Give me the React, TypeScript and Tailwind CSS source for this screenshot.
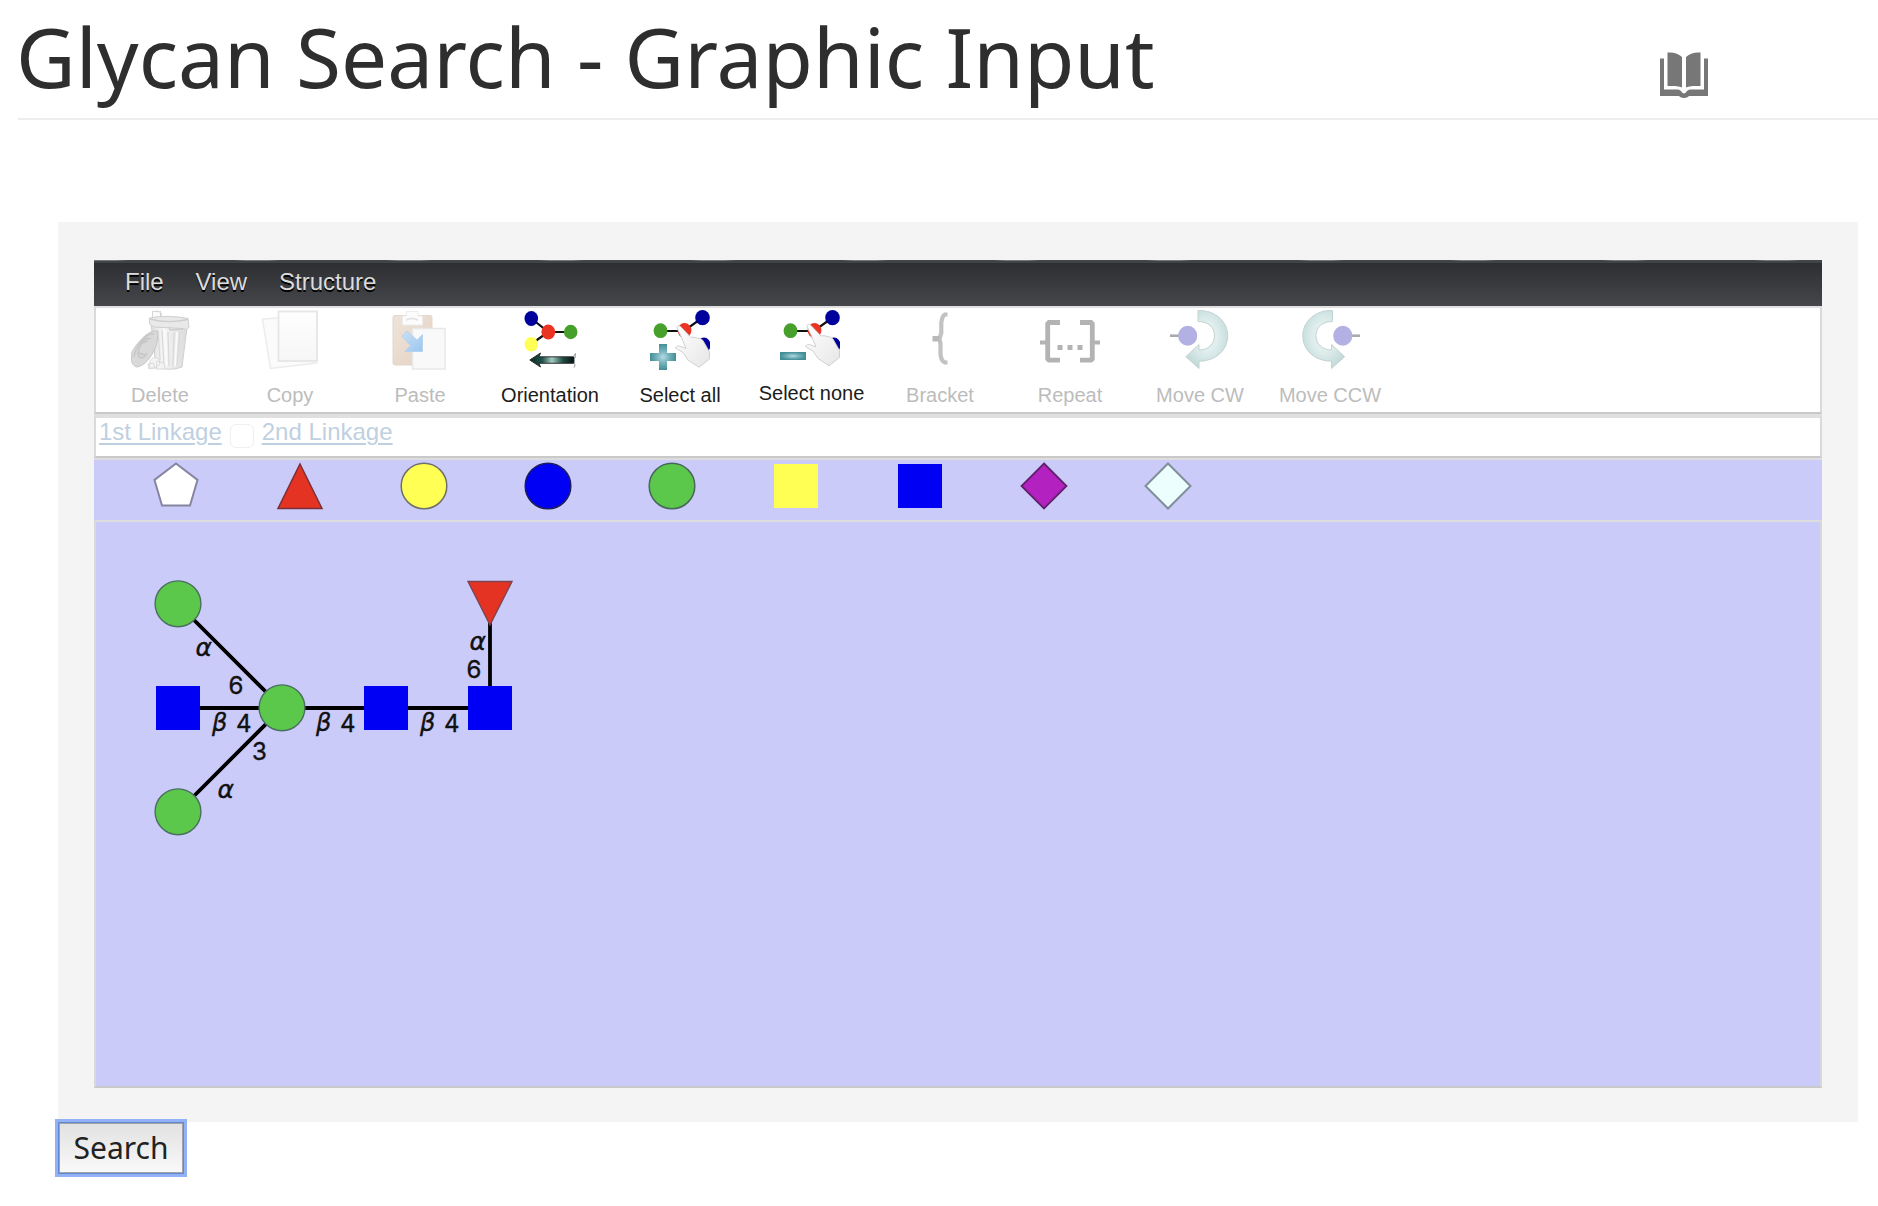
import React from "react";

type IconProps = { children: React.ReactNode };

function Icon({ children }: IconProps) {
  return (
    <svg width="60" height="60" viewBox="0 0 60 60" className="block">
      {children}
    </svg>
  );
}

function TrashIcon() {
  return (
    <Icon>
      <defs>
        <linearGradient id="can" x1="0" x2="1">
          <stop offset="0" stopColor="#dedede" />
          <stop offset="0.35" stopColor="#f6f6f6" />
          <stop offset="0.7" stopColor="#e6e6e6" />
          <stop offset="1" stopColor="#dcdcdc" />
        </linearGradient>
      </defs>
      <rect x="22.5" y="1.5" width="8" height="7" fill="#fafafa" stroke="#d6d6d6" />
      <path d="M26 0.5L31.5 3V8" fill="none" stroke="#dcdcdc" />
      <path d="M21 13L26 57Q40 61.5 52 57L57 17Z" fill="url(#can)" stroke="#d0d0d0" />
      <path d="M19.5 8Q38 4.500 58 8.500L59 17Q57 21 53 18.500L24 17L19.500 14Z" fill="#e9e9e9" stroke="#cfcfcf" />
      <path d="M20 9Q38 14 58 9.500M39 17L40 20L53 19" fill="none" stroke="#cecece" strokeWidth="1.300" />
      <path d="M32 20L34 54M38 22L39 56M44 23L43 56M50 22L47 56M28 20L30 50" fill="none" stroke="#d9d9d9" strokeWidth="1.200" />
      <path d="M35 20L36.500 55M47 22L45 56" fill="none" stroke="#fafafa" strokeWidth="2" />
      <path d="M27 21C20 19 8 31 2 42C1 50 1 54 6 57C14 57 22 47 26 36C28 29 28 24 27 21Z" fill="#d9d9d9" stroke="#c8c8c8" />
      <path d="M24 24C16 22 5 38 4 47M21 29C15 26 9 35 8 44C9 49 14 49 17 43M18 31L12 33M9 43L15 45" fill="none" stroke="#c6c6c6" strokeWidth="1.500" />
      <path d="M20 51L24 47L29 49L30 54L26 58H19ZM27 51L34 53L35 59H26ZM18 54L23 53L25 58L19 59Z" fill="#f3f3f3" stroke="#d8d8d8" strokeWidth="0.900" />
    </Icon>
  );
}

function CopyIcon() {
  return (
    <Icon>
      <defs>
        <linearGradient id="sheet" x1="0" x2="0" y1="0" y2="1">
          <stop offset="0" stopColor="#fefefe" />
          <stop offset="1" stopColor="#f6f6f6" />
        </linearGradient>
      </defs>
      <path d="M2.500 9L18 8L49 50L56 53L10.500 58.500Z" fill="#fbfbfb" stroke="#ececec" strokeWidth="1.500" />
      <rect x="18.500" y="1.500" width="38.500" height="49.500" fill="url(#sheet)" stroke="#e6e6e6" strokeWidth="1.800" />
    </Icon>
  );
}

function PasteIcon() {
  return (
    <Icon>
      <defs>
        <linearGradient id="board" x1="0" x2="1" y1="0" y2="1">
          <stop offset="0" stopColor="#efe3d9" />
          <stop offset="1" stopColor="#e3d2c3" />
        </linearGradient>
        <linearGradient id="down" x1="0" x2="1" y1="0" y2="1">
          <stop offset="0" stopColor="#c9e0f6" />
          <stop offset="1" stopColor="#9cc6f0" />
        </linearGradient>
      </defs>
      <rect x="3" y="5.500" width="39" height="49.500" rx="2" fill="url(#board)" stroke="#e3d6cb" />
      <path d="M12.500 6H16.500V1.500H28V6H32.500V15H12.500Z" fill="#fcfcfc" stroke="#ececec" />
      <path d="M16 10Q22 7 28 10" fill="none" stroke="#e5e5e5" strokeWidth="2" />
      <rect x="22.500" y="18.500" width="32.500" height="40.500" fill="#f9f9f9" stroke="#e8e8e8" strokeWidth="1.500" />
      <path d="M12 26L17 21L27 30L32.500 24.500V41.500H15L20.500 35.500Z" fill="url(#down)" stroke="#b0d0ee" strokeWidth="0.800" />
    </Icon>
  );
}

function OrientationIcon() {
  return (
    <Icon>
      <defs>
        <linearGradient id="shaft" x1="0" x2="1">
          <stop offset="0" stopColor="#0d2a27" />
          <stop offset="0.280" stopColor="#1f5148" />
          <stop offset="0.500" stopColor="#a5cbc0" />
          <stop offset="0.750" stopColor="#1f4c44" />
          <stop offset="1" stopColor="#06110f" />
        </linearGradient>
      </defs>
      <path d="M11.300 8.500L28.300 22L11.300 34M28.300 22H50" fill="none" stroke="#111" strokeWidth="2.200" />
      <ellipse cx="11.300" cy="8.500" rx="6.800" ry="7.400" fill="#00009c" />
      <ellipse cx="28.300" cy="22" rx="6.900" ry="7.400" fill="#ea3323" />
      <ellipse cx="50.700" cy="22" rx="6.800" ry="7.200" fill="#48a02c" />
      <ellipse cx="11.300" cy="34.300" rx="6.700" ry="7.200" fill="#ffff54" />
      <path d="M9.800 50L20.500 43L19 46.800H54V53.300H19L20.500 57Z" fill="url(#shaft)" stroke="#222" strokeWidth="0.900" />
      <path d="M53 47L55.500 43.500L55 48M53.500 53Q56 54 54 57.500" fill="none" stroke="#999" strokeWidth="1" />
    </Icon>
  );
}

function SelectIcon({ mode }: { mode: "all" | "none" }) {
  const hand = mode === "all" ? "translate(0 0)" : "translate(0 -1.5)";
  return (
    <Icon>
      <defs>
        <radialGradient id={"teal-" + mode}>
          <stop offset="0" stopColor="#b4dbe4" />
          <stop offset="0.450" stopColor="#79b4bd" />
          <stop offset="1" stopColor="#438f95" />
        </radialGradient>
        <linearGradient id={"hand-" + mode} x1="0" x2="1" y1="0" y2="1">
          <stop offset="0" stopColor="#fff" />
          <stop offset="1" stopColor="#e6e6e6" />
        </linearGradient>
      </defs>
      <path d="M10 21H34L52 8" fill="none" stroke="#111" strokeWidth="2.200" />
      <ellipse cx="10.500" cy="20.700" rx="6.900" ry="7.400" fill="#48a02c" />
      <ellipse cx="34.500" cy="20.500" rx="6.900" ry="7.400" fill="#ea3323" />
      <ellipse cx="52.500" cy="7.700" rx="7.300" ry="7.600" fill="#00009c" />
      <ellipse cx="54" cy="35" rx="6.500" ry="7.500" fill="#00009c" />
      <path
        transform={hand}
        d="M27 18C27 15.500 29 15 31 17L41 27.500Q44 26.500 47 28Q51 28 53 30.500L59.500 42V49L49 57.300L38 50L33 42.500L25.500 38Q27 35 31 36.500L36 38.500L31.500 27.500Z"
        fill={mode === "all" ? "url(#hand-all)" : "url(#hand-none)"}
        stroke="#cccccc"
        strokeWidth="0.900"
      />
      {mode === "all" ? (
        <path d="M9 34H17V43H26V51H17V60H9V51H0V43H9Z" fill="url(#teal-all)" />
      ) : (
        <rect x="0" y="42" width="26" height="8" fill="url(#teal-none)" />
      )}
    </Icon>
  );
}

function BracketIcon() {
  return (
    <Icon>
      <path d="M37.500 4.500H35Q32 6 31.300 13V23L29.500 28.700L30.500 34V44Q31 51 35 52.500H37.500" fill="none" stroke="#c2c2c2" strokeWidth="4.200" />
      <rect x="22.500" y="26" width="7" height="5.500" fill="#b9b9b9" />
    </Icon>
  );
}

function RepeatIcon() {
  return (
    <Icon>
      <path d="M20 12.500H9L7.700 14V49L9 50.200H20M40 12.500H51L52.300 14V49L51 50.200H40" fill="none" stroke="#b3b3b3" strokeWidth="4.800" />
      <path d="M0 32.500H6M54 32.500H60" stroke="#b3b3b3" strokeWidth="4" />
      <path d="M17.500 35H22.500V40H17.500ZM27.500 35H32.500V40H27.500ZM37.500 35H42.500V40H37.500Z" fill="#b3b3b3" />
    </Icon>
  );
}

function MoveIcon({ flip = false }: { flip?: boolean }) {
  return (
    <Icon>
      <defs>
        <radialGradient id={flip ? "ring-l" : "ring-r"} cx="0.500" cy="0.450" r="0.600">
          <stop offset="0.400" stopColor="#e0efee" />
          <stop offset="1" stopColor="#c0d8d7" />
        </radialGradient>
      </defs>
      <g transform={flip ? "translate(60.500 0) scale(-1 1)" : undefined}>
        <path d="M0 25.700H9" stroke="#aaa" strokeWidth="2.600" />
        <ellipse cx="17.700" cy="25.700" rx="9.600" ry="10" fill="#b3b1e4" />
        <path
          d="M28 0.500C46 0 57.700 12 57.700 25.700C57.700 40 46 51 29 51.200V58.500L15.800 46.700L29 34.500V40C38 40 44.500 34 44.500 25.700C44.500 17 38 11.500 28 11.500Z"
          fill={flip ? "url(#ring-l)" : "url(#ring-r)"}
          stroke="#c3d3d2"
          strokeWidth="1"
        />
      </g>
    </Icon>
  );
}

const tools = [
  { label: "Delete", icon: <TrashIcon />, on: false },
  { label: "Copy", icon: <CopyIcon />, on: false },
  { label: "Paste", icon: <PasteIcon />, on: false },
  { label: "Orientation", icon: <OrientationIcon />, on: true },
  { label: "Select all", icon: <SelectIcon mode="all" />, on: true },
  { label: "Select none", icon: <SelectIcon mode="none" />, on: true, raised: true },
  { label: "Bracket", icon: <BracketIcon />, on: false },
  { label: "Repeat", icon: <RepeatIcon />, on: false },
  { label: "Move CW", icon: <MoveIcon />, on: false },
  { label: "Move CCW", icon: <MoveIcon flip />, on: false },
];

const residues = [
  <polygon points="24,1.500 45.500,18 38,43.500 10,43.500 2.500,18" fill="#fff" stroke="#8585a0" strokeWidth="2" />,
  <polygon points="24,2 46,46.500 2,46.500" fill="#e53323" stroke="#7a3038" strokeWidth="1.500" />,
  <circle cx="24" cy="24" r="22.800" fill="#ffff54" stroke="#70706a" strokeWidth="1.500" />,
  <circle cx="24" cy="24" r="22.800" fill="#0000f5" stroke="#1c1c60" strokeWidth="1.500" />,
  <circle cx="24" cy="24" r="22.800" fill="#5bc74b" stroke="#47685a" strokeWidth="1.500" />,
  <rect x="2" y="2" width="44" height="44" fill="#ffff54" />,
  <rect x="2" y="2" width="44" height="44" fill="#0000f5" />,
  <polygon points="24,1.500 46.500,24 24,46.500 1.500,24" fill="#b322c0" stroke="#60206c" strokeWidth="1.800" />,
  <polygon points="24,1.500 46.500,24 24,46.500 1.500,24" fill="#ecfffe" stroke="#808e98" strokeWidth="2" />,
];

function Glycan() {
  const betas = [0, 104, 208];
  return (
    <svg width="500" height="400" viewBox="96 522 500 400" className="block">
      <g stroke="#000" strokeWidth="3.800">
        <path d="M178 604L282 708L178 812" fill="none" />
        <path d="M178 708H490M490 708V610" fill="none" />
      </g>
      <g fill="#5bc74b" stroke="#4b6f60" strokeWidth="1.400">
        <circle cx="178" cy="603.800" r="22.900" />
        <circle cx="178" cy="811.800" r="22.900" />
        <circle cx="282" cy="707.800" r="22.900" />
      </g>
      <g fill="#0000f5">
        <rect x="156" y="686" width="44" height="44" />
        <rect x="364" y="686" width="44" height="44" />
        <rect x="468" y="686" width="44" height="44" />
      </g>
      <polygon points="468,581.500 512,581.500 490,625" fill="#e53323" stroke="#7a4550" strokeWidth="1.400" />
      <g fill="#111" stroke="#111" strokeWidth="0.400" fontSize="24" fontFamily="Inter, sans-serif">
        <g fontStyle="italic" fontSize="25" fontFamily="'DejaVu Sans', sans-serif">
          <text x="195.500" y="656">α</text>
          <text x="217.500" y="798">α</text>
          <text x="469.500" y="650">α</text>
          {betas.map((dx) => (
            <text key={dx} x={212 + dx} y="731" fontSize="24">β</text>
          ))}
        </g>
        <text x="228.500" y="694">6</text>
        <text x="252" y="760">3</text>
        <text x="466.500" y="678">6</text>
        {betas.map((dx) => (
          <text key={dx} x={236 + dx} y="731.500">4</text>
        ))}
      </g>
    </svg>
  );
}

export default function App() {
  return (
    <div className="h-[1206px] w-[1878px] overflow-hidden bg-white font-['Liberation_Sans',Arial,sans-serif]">
      <header className="ml-[18px] flex h-[120px] items-start justify-between border-b-2 border-[#eeeeee] pr-[170px]">
        <h1 className="-ml-[2px] font-['Noto_Sans',sans-serif] text-[82px] leading-[112px] font-normal whitespace-nowrap text-[#2e2e2e]">
          Glycan Search - Graphic Input
        </h1>
        <svg width="48" height="48" viewBox="0 0 48 48" className="mt-[50px] block" fill="#777777">
          <path d="M7.500 2.500C14 2 19 4 22 7V37.500C18 36 13 35.700 7.500 36Z" />
          <path d="M40.500 2.500C34 2 29 4 26 7V37.500C30 36 35 35.700 40.500 36Z" />
          <path d="M0 8.500H4V39.500H18C21 39.500 22 43.500 24 43.500C26 43.500 27 39.500 30 39.500H44V8.500H48V46H29C27 48.500 21 48.500 19 46H0Z" />
        </svg>
      </header>

      <main className="mt-[102px] ml-[58px] h-[900px] w-[1800px] bg-[#f4f4f4] px-[36px] pt-[38px]">
        <nav className="flex h-[46px] flex-col bg-gradient-to-b from-[#2c2d30] to-[#46474b]">
          <div className="h-px bg-[repeating-linear-gradient(90deg,#75787a_0px,#75787a_22px,#45484b_34px,#45484b_140px,#75787a_152px)]" />
          <div className="h-[2px] bg-[#414447]" />
          <div className="flex pl-[31px] text-2xl leading-[38px] text-[#dcdcdc] [text-shadow:0_2px_0_#000]">
            <span className="w-[70.500px]">File</span>
            <span className="w-[83.500px]">View</span>
            <span>Structure</span>
          </div>
        </nav>

        <div className="flex h-[108px] border-2 border-t-[#e0e0e0] border-r-[#dadada] border-b-[#c8c8c8] border-l-[#dadada] bg-white pt-[2px]">
          {tools.map((t) => (
            <div key={t.label} className="flex w-[130px] shrink-0 flex-col items-center pr-[2px]">
              {t.icon}
              <span
                className={
                  "text-xl leading-6 whitespace-nowrap " +
                  (t.on ? "text-[#1c1c1c] " : "text-[#bcbcbc] ") +
                  (t.raised ? "mt-[11px] pl-[3px]" : "mt-[13px]")
                }
              >
                {t.label}
              </span>
            </div>
          ))}
        </div>

        <div className="mt-[2px] flex h-[42px] border-2 border-t-[#e0e0e0] border-r-[#dadada] border-b-[#c9c9c9] border-l-[#dadada] bg-white pl-[3px] text-2xl leading-7 text-[#bfd0e1] shadow-[0_-2px_0_#e0e0e0]">
          <span className="underline decoration-2 underline-offset-[3px]">1st Linkage</span>
          <span className="mx-[8px] mt-[6px] h-6 w-6 rounded-[6px] border-[1.500px] border-[#efefef]" />
          <span className="underline decoration-2 underline-offset-[3px]">2nd Linkage</span>
        </div>

        <div className="h-[2px] bg-[#dddddd]" />
        <div className="flex h-[60px] bg-[#cbcbfa] pt-[2px] pl-[20px]">
          {residues.map((shape, i) => (
            <div key={i} className="flex w-[124px] justify-center">
              <svg width="48" height="48" viewBox="0 0 48 48" className="block">
                {shape}
              </svg>
            </div>
          ))}
        </div>

        <div className="h-[568px] border-2 border-t-[#dddddd] border-r-[#d8d8d8] border-b-[#c8c8c8] border-l-[#d8d8d8] bg-[#cbcbfa]">
          <Glycan />
        </div>
      </main>

      <button className="ml-[58px] block h-[52px] w-[126px] border-2 border-[#a3a6a6] bg-gradient-to-b from-[#e2e2e2] to-[#f9f9f9] font-['Noto_Sans',sans-serif] text-[30px] leading-[46px] text-[#222222] shadow-[0_0_0_3px_#93b1f6] outline-1 -outline-offset-1 outline-[#5f88d0]">
        Search
      </button>
    </div>
  );
}
